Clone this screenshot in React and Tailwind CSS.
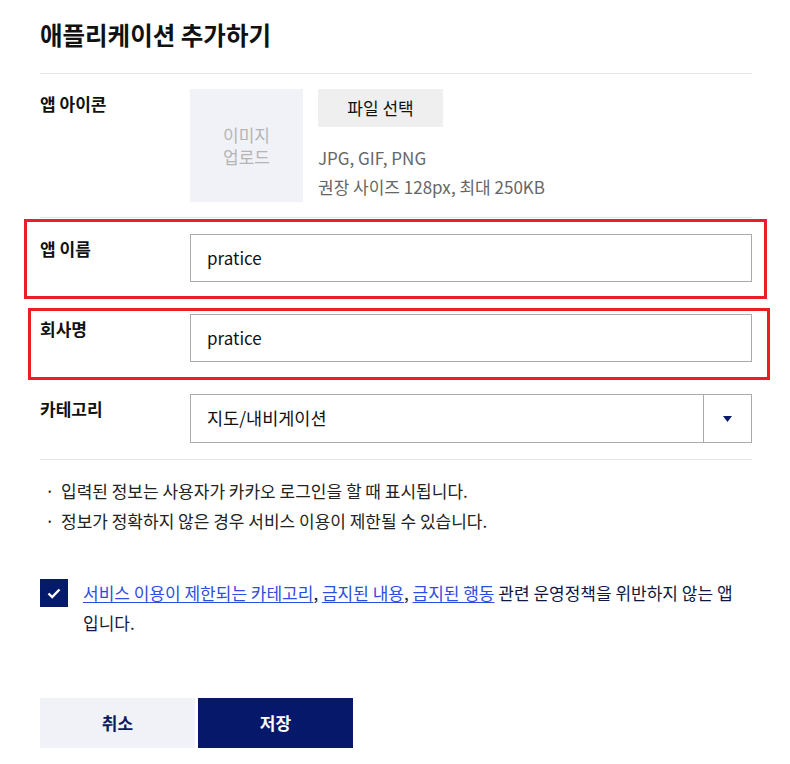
const FONT = "font-['Noto_Sans_CJK_KR','Noto_Sans',sans-serif]";

const Label = ({children}) => (
  <div className="w-[150px] shrink-0 text-[17px] leading-[30px] font-bold text-[#111]">{children}</div>
);

const TextRow = ({label, value, box}) => (
  <div className="relative flex py-4">
    <Label>{label}</Label>
    <div className="flex-1 h-[48px] border border-[#aaaaaa] flex items-center px-4 text-[17px] text-[#111]">
      {value}
    </div>
    <div className={`pointer-events-none absolute border-[3px] border-[#ee1c25] ${box}`}></div>
  </div>
);

const App = () => {
  return (
    <div className={`${FONT} bg-white w-[790px] min-h-[764px] pl-10 pr-[38px] text-[#222]`}>
      <div className="pt-[18px] pb-[21px] border-b border-[#e5e5e5]">
        <h1 className="text-[24.5px] leading-[34px] font-bold text-[#111]">애플리케이션 추가하기</h1>
      </div>

      {/* 앱 아이콘 */}
      <div className="flex pt-[15px] pb-[15px] border-b border-[#e5e5e5]">
        <Label>앱 아이콘</Label>
        <div className="w-[113px] h-[113px] bg-[#f1f2f7] flex items-center justify-center text-center text-[17px] leading-[22px] text-[#b5b5b5]">
          이미지<br />업로드
        </div>
        <div className="ml-[15px]">
          <button className="w-[125px] h-[38px] bg-[#efefef] text-[17px] text-[#111]">파일 선택</button>
          <div className="mt-4 text-[17px] leading-[29px] text-[#666]">
            <p>JPG, GIF, PNG</p>
            <p>권장 사이즈 128px, 최대 250KB</p>
          </div>
        </div>
      </div>

      <TextRow label="앱 이름" value="pratice" box="-left-4 -right-[15px] top-[1px] -bottom-[1px]" />
      <TextRow label="회사명" value="pratice" box="-left-3 -right-[18px] top-[10px] -bottom-[2px]" />

      {/* 카테고리 */}
      <div className="flex py-4 border-b border-[#e5e5e5]">
        <Label>카테고리</Label>
        <div className="flex-1 h-[49px] border border-[#aaaaaa] flex items-center">
          <span className="flex-1 px-4 text-[17.5px] text-[#111]">지도/내비게이션</span>
          <div className="w-[48px] h-full border-l border-[#aaaaaa] flex items-center justify-center">
            <svg width="9" height="6" viewBox="0 0 9 6"><path d="M0 0h9L4.5 6z" fill="#0b1a6b" /></svg>
          </div>
        </div>
      </div>

      {/* 안내 */}
      <ul className="pt-4 text-[17px] leading-[30px] text-[#222]">
        <li className="flex"><span className="w-[21px] pl-[5px]">·</span>입력된 정보는 사용자가 카카오 로그인을 할 때 표시됩니다.</li>
        <li className="flex"><span className="w-[21px] pl-[5px]">·</span>정보가 정확하지 않은 경우 서비스 이용이 제한될 수 있습니다.</li>
      </ul>

      <div className="flex mt-[43px]">
        <div className="w-[28px] h-[28px] bg-[#061a6b] flex items-center justify-center shrink-0">
          <svg width="14" height="11" viewBox="0 0 14 11" fill="none">
            <path d="M1.5 5.5l3.7 3.6L12.5 1.5" stroke="#fff" strokeWidth="2.4" />
          </svg>
        </div>
        <p className="ml-[15px] w-[669px] break-keep text-[17px] leading-[30px] -mt-px text-[#111844]">
          <a className="text-[#2e4de0] underline underline-offset-2">서비스 이용이 제한되는 카테고리</a>,{' '}
          <a className="text-[#2e4de0] underline underline-offset-2">금지된 내용</a>,{' '}
          <a className="text-[#2e4de0] underline underline-offset-2">금지된 행동</a> 관련 운영정책을 위반하지 않는 앱 입니다.
        </p>
      </div>

      <div className="flex gap-[3px] mt-[60px]">
        <button className="w-[155px] h-[50px] bg-[#f1f2f7] text-[17px] font-bold text-[#0a1a5c]">취소</button>
        <button className="w-[155px] h-[50px] bg-[#05186a] text-[17px] font-bold text-white">저장</button>
      </div>
    </div>
  );
};

export default App;
